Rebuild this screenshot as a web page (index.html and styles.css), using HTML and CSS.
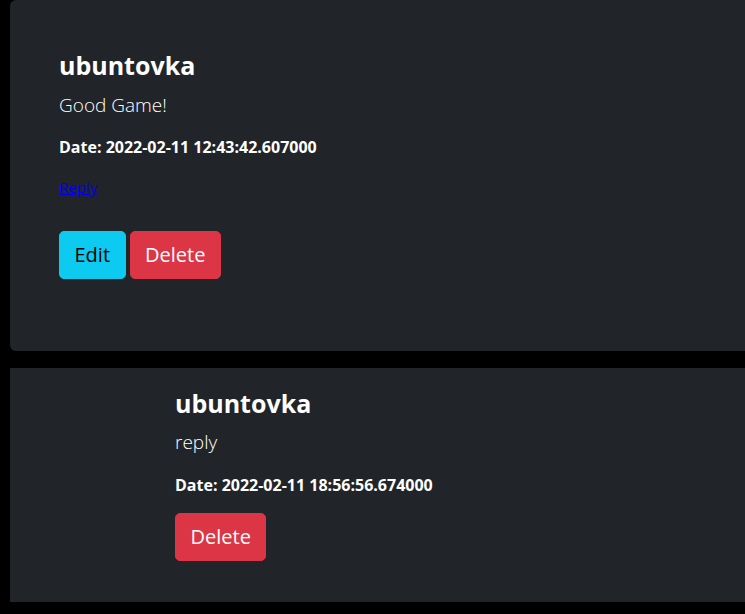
FILE: index.html
```html
<!DOCTYPE html>
<html>
<head>
<meta charset="utf-8">
<link rel="stylesheet" href="styles.css">
</head>
<body>
  <div class="card card-main">
    <h3 class="name">ubuntovka</h3>
    <p class="lead">Good Game!</p>
    <p class="date">Date: 2022-02-11 12:43:42.607000</p>
    <p class="link-row"><a href="#">Reply</a></p>
    <div class="actions">
      <button class="btn btn-info">Edit</button>
      <button class="btn btn-danger">Delete</button>
    </div>
  </div>
  <div class="card card-reply">
    <h3 class="name">ubuntovka</h3>
    <p class="lead">reply</p>
    <p class="date">Date: 2022-02-11 18:56:56.674000</p>
    <div class="actions">
      <button class="btn btn-danger">Delete</button>
    </div>
  </div>
</body>
</html>
```
FILE: styles.css
```css
html { overflow: hidden; }
body {
  margin: 0;
  background: #000;
  color: #fff;
  font-family: "Open Sans", "Noto Sans", sans-serif;
}
.card {
  background: #212529;
  margin-left: 10px;
  margin-right: -20px;
}
.card-main {
  border-radius: 6px;
  padding: 50px 49px 72px;
}
.card-reply {
  margin-top: 17px;
  padding: 20px 49px 41px 165px;
}
.name {
  margin: 0 0 10px;
  font-size: 25px;
  line-height: 30px;
  font-weight: 700;
}
.card-reply .name { margin-bottom: 9px; }
.lead {
  margin: 0 0 16px;
  font-size: 19px;
  line-height: 30px;
  font-weight: 300;
}
.card-reply .lead { margin-bottom: 17px; }
.date {
  margin: 0 0 18px;
  font-size: 16px;
  line-height: 22px;
  font-weight: 700;
}
.card-reply .date { margin-bottom: 17px; }
.link-row {
  margin: 0 0 33px;
  font-size: 15px;
  line-height: 22px;
}
.link-row a { color: #0000ee; }
.actions { display: flex; gap: 4px; }
.btn {
  font-family: inherit;
  font-size: 20px;
  line-height: 30px;
  padding: 8px 14.5px;
  border: 1px solid transparent;
  border-radius: 5px;
  cursor: pointer;
}
.btn-info { background: #0dcaf0; color: #000; border-color: #0dcaf0; }
.btn-danger { background: #dc3545; color: #fff; border-color: #dc3545; }
```
